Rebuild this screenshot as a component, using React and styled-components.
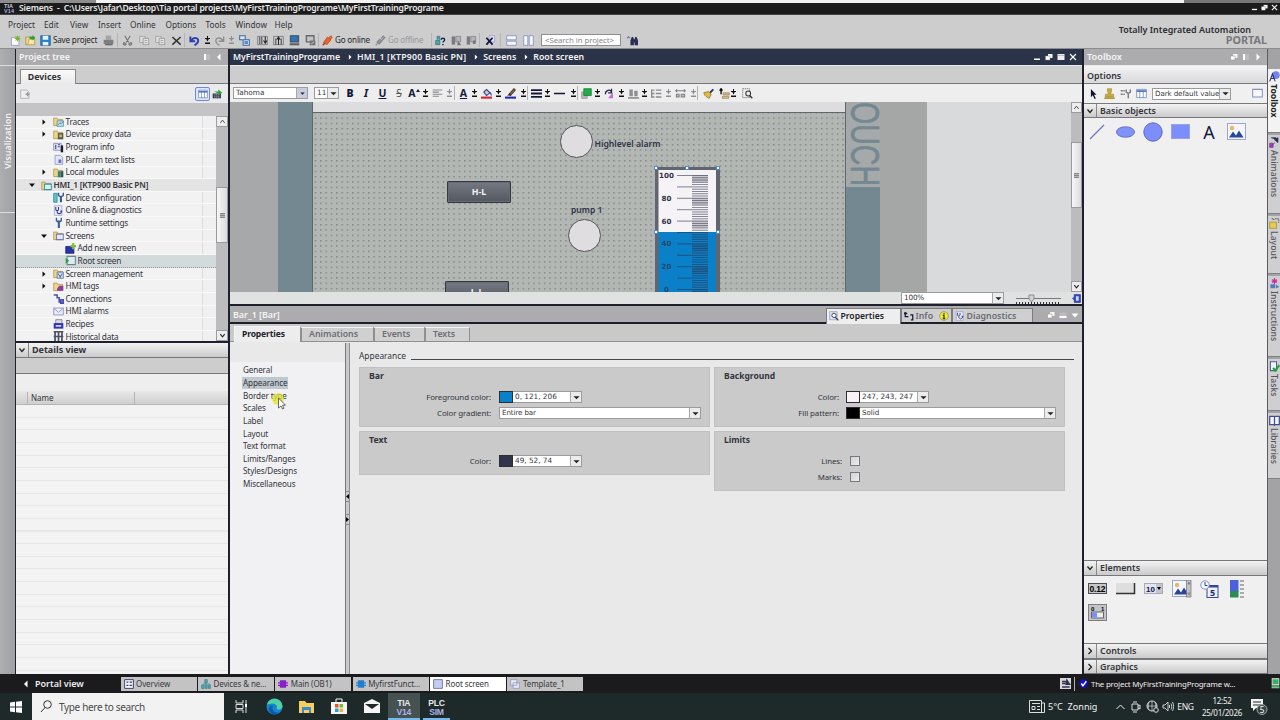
import React from 'react';
import styled, { createGlobalStyle, css, ThemeProvider } from 'styled-components';

const theme = {
  color: {
    text: '#34353b',
    chrome: '#cdcdce',
    panel: '#f0f0f1',
    head: '#acacae',
    navy: '#2b3348',
    edge: '#1e202b',
    line: '#77787c',
    group: '#cacacb',
  },
  font: {
    ui: '"Noto Sans", "Open Sans", sans-serif',
    form: '"DejaVu Sans", sans-serif',
  },
};

const GlobalStyle = createGlobalStyle`
  * { box-sizing: border-box; }
  body {
    margin: 0;
    width: 1280px;
    height: 720px;
    overflow: hidden;
    font-family: ${theme.font.ui};
    font-size: 8.6px;
    line-height: 12px;
    color: ${theme.color.text};
  }
  svg { display: block; flex: none; }
`;

const Label = styled.span`
  white-space: pre;
  font-size: ${props => props.$size || 8.6}px;
  font-weight: ${props => props.$weight || 400};
  letter-spacing: ${props => props.$track || 0}px;
  color: ${props => props.$color || 'inherit'};
  line-height: 12px;
`;

const Window = styled.div`
  width: 1280px;
  height: 720px;
  display: flex;
  flex-direction: column;
  background: ${props => props.theme.color.chrome};
`;

const TopSliver = styled.div`
  height: 3px;
  flex: none;
  background: linear-gradient(90deg, #8d8d8d 96px, #f2f2f2 96px, #f2f2f2 1184px, #777 1184px);
`;

const TitleBar = styled.header`
  height: 12px;
  flex: none;
  display: flex;
  align-items: center;
  padding: 0 1px 2px 4px;
  background: #1b1b1c;
  border-bottom: 1px solid #454546;
  color: #e8e8e8;
`;

const Spacer = styled.div`
  flex: 1;
`;

const TopArea = styled.div`
  height: 34px;
  flex: none;
  display: flex;
  justify-content: space-between;
  border-bottom: 1px solid #8d8d90;
`;

const MenuBar = styled.nav`
  height: 18px;
  display: flex;
  align-items: center;
  padding: 1px 0 0 8px;
`;

const MenuItem = styled.span`
  width: ${props => props.$w}px;
  white-space: pre;
  font-size: 8.3px;
`;

const ToolRow = styled.div`
  display: flex;
  align-items: center;
  height: ${props => props.$h || 14}px;
  padding-left: ${props => props.$pad || 0}px;
`;

const Slot = styled.div`
  width: ${props => props.$w}px;
  height: 14px;
  display: flex;
  align-items: center;
  justify-content: ${props => (props.$start ? 'flex-start' : 'center')};
  flex: none;
  white-space: nowrap;
  ${props => props.$sep && css`border-left: 1px solid #b3b3b5;`}
`;

const SearchBox = styled.div`
  width: 80px;
  height: 12px;
  border: 1px solid #8f8f92;
  background: #fff;
  display: flex;
  align-items: center;
  padding-left: 3px;
  color: #8b8b8e;
`;

const Brand = styled.div`
  display: flex;
  flex-direction: column;
  align-items: flex-end;
  padding: 9px 13px 0 0;
  & > :first-child { margin-right: 16px; line-height: 11px; }
  & > :last-child { line-height: 9px; }
`;

const Work = styled.main`
  height: 625px;
  flex: none;
  display: flex;
`;

const Rail = styled.aside`
  width: 16px;
  background: linear-gradient(90deg, #aeaeb1, #9fa0a3);
  border-right: 1px solid ${props => props.theme.color.edge};
  display: flex;
  flex-direction: column;
`;

const RailTop = styled.div`
  height: 17px;
  border-bottom: 1px solid #ddd;
`;

const RailTab = styled.div`
  height: 147px;
  border-bottom: 1px solid #ddd;
  display: flex;
  align-items: flex-end;
  justify-content: center;
  padding-bottom: 43px;
`;

const RailText = styled.span`
  writing-mode: vertical-rl;
  transform: rotate(180deg);
  color: #f3f3f5;
  font-size: 9px;
  font-weight: 600;
  line-height: 12px;
`;

const Column = styled.section`
  width: ${props => props.$w}px;
  flex: none;
  display: flex;
  flex-direction: column;
  background: ${props => props.theme.color.panel};
  border-right: ${props => props.$edge || 0}px solid ${props => props.theme.color.edge};
`;

const PanelHead = styled.div`
  height: 17px;
  flex: none;
  display: flex;
  align-items: center;
  gap: 4px;
  padding: 0 5px 0 3px;
  color: #f4f4f4;
  background: ${props => (props.$active ? props.theme.color.navy : props.theme.color.head)};
  border-bottom: 1px solid #e9e9ea;
`;

const Band = styled.div`
  height: ${props => props.$h}px;
  flex: none;
  display: flex;
  align-items: ${props => (props.$center ? 'center' : 'flex-end')};
  background: ${props => props.$bg || props.theme.color.chrome};
  border-bottom: ${props => (props.$flat ? 'none' : `1px solid ${props.theme.color.line}`)};
`;

const DevicesTab = styled.div`
  width: 56px;
  height: 15px;
  margin: 0 0 -1px 4px;
  padding-right: 7px;
  display: flex;
  align-items: center;
  justify-content: center;
  background: linear-gradient(#fafafa, #eaeaeb);
  border: 1px solid #8a8a8d;
  border-bottom: none;
`;

const TreeTools = styled.div`
  height: 19px;
  flex: none;
  display: flex;
  align-items: center;
  padding: 0 5px 0 4px;
  gap: 2px;
  background: #eaeaec;
`;

const ToggleBox = styled.div`
  width: 15px;
  height: 14px;
  border: 1px solid #6b8bcf;
  border-radius: 2px;
  background: #dde5f7;
  display: flex;
  align-items: center;
  justify-content: center;
`;

const TreeArea = styled.div`
  height: 227px;
  flex: none;
  display: flex;
  overflow: hidden;
  border-bottom: 2px solid ${props => props.theme.color.edge};
`;

const TreeList = styled.div`
  width: 200px;
  overflow: hidden;
  background: linear-gradient(90deg, #f2f2f3 186px, #dcdcde 186px, #dcdcde 187px, #f0f0f1 187px);
`;

const TreeRow = styled.div`
  height: 12.65px;
  display: flex;
  align-items: center;
  padding-left: ${props => 13 + props.$depth * 12}px;
  border-bottom: 1px solid #f9f9fa;
  ${props => props.$strong && css`background: #e4e4e5;`}
  ${props => props.$selected && css`
    background: #d3dadb;
    border-bottom: 1px dotted #8d9698;
  `}
`;

const TreeIcon = styled.span`
  width: ${props => props.$w}px;
  display: flex;
  flex: none;
`;

const ScrollTrack = styled.div`
  width: ${props => props.$w || 11}px;
  flex: none;
  display: flex;
  flex-direction: column;
  background: #bcbcbf;
`;

const ScrollButton = styled.div`
  height: 11px;
  display: flex;
  align-items: center;
  justify-content: center;
  background: #ededee;
  border: 1px solid #9c9c9f;
`;

const Thumb = styled.div`
  height: ${props => props.$h}px;
  margin-top: ${props => props.$top}px;
  background: linear-gradient(90deg, #f7f7f8, #dcdcde);
  border: 1px solid #9a9a9d;
  display: flex;
  align-items: center;
  justify-content: center;
`;

const Grip = styled.i`
  width: 5px;
  height: 5px;
  background: repeating-linear-gradient(#88888b 0 1px, #b5b5b8 1px 2px);
`;

const SectionHead = styled.div`
  height: ${props => props.$h || 15}px;
  flex: none;
  display: flex;
  align-items: center;
  background: linear-gradient(#f2f2f3, #cbcbcc);
  border-top: ${props => (props.$top ? '1px solid #77787c' : 'none')};
  border-bottom: 1px solid #77787c;
`;

const SectionToggle = styled.div`
  width: 13px;
  align-self: stretch;
  display: flex;
  align-items: center;
  justify-content: center;
  border-right: 1px solid #88888b;
  margin-right: 3px;
`;

const NameHead = styled.div`
  height: 14px;
  flex: none;
  display: grid;
  grid-template-columns: 12px 107px 1fr;
  align-items: center;
  background: linear-gradient(#e8e8e9, #cfcfd0);
  border-bottom: 1px solid #b5b5b7;
  & > span { border-right: 1px solid #b5b5b7; padding-left: 3px; height: 12px; }
`;

const EmptyRows = styled.div`
  flex: 1;
  background: repeating-linear-gradient(#f3f3f4 0 11.6px, #e7e7ea 11.6px 12.65px);
`;

const FormatBar = styled.div`
  height: 18px;
  flex: none;
  display: flex;
  align-items: center;
  padding-left: 3px;
  background: #eeeeef;
`;

const Combo = styled.div`
  width: ${props => props.$w}px;
  height: 12px;
  flex: none;
  display: flex;
  align-items: stretch;
  background: #fff;
  border: 1px solid #9b9b9e;
  color: #36373c;
`;

const ComboText = styled.span`
  flex: 1;
  white-space: nowrap;
  font-family: ${props => props.theme.font.form};
  font-size: ${props => props.$size || 7.3}px;
  letter-spacing: ${props => props.$track || 0}px;
  line-height: 10.5px;
  padding-left: 2px;
`;

const ComboButton = styled.span`
  width: 11px;
  flex: none;
  display: flex;
  align-items: center;
  justify-content: center;
  border-left: 1px solid #a9a9ac;
  background: ${props => props.$bg || '#ececed'};
`;

const Swatch = styled.span`
  width: 14px;
  margin: -1px 0 -1px -1px;
  background: ${props => props.$color};
  border: 1px solid #2e2e33;
`;

const CanvasRow = styled.div`
  height: 190px;
  flex: none;
  display: flex;
  overflow: hidden;
`;

/* The device is a free canvas, its objects keep their own coordinates. */
const Canvas = styled.div`
  position: relative;
  width: 841px;
  height: 190px;
  overflow: hidden;
  display: grid;
  grid-template-columns: 48px 34px 534px 34px 47px 144px;
  background: #d9dadb;
`;

const CasePart = styled.div`
  background: ${props => props.$bg};
`;

const Screen = styled.div`
  border-left: 1px solid #62656c;
  border-right: 1px solid #62656c;
  background:
    radial-gradient(circle at 2.6px 2.6px, #646a69 0.4px, transparent 0.8px) 0 13.6px / 5.34px 5.34px,
    #b3b7b3;
`;

const ScreenBand = styled.div`
  height: 11px;
  background: #dddcdf;
  border-bottom: 1px solid #62656c;
`;

const CanvasItem = styled.div`
  position: absolute;
  left: ${props => props.$x}px;
  top: ${props => props.$y}px;
`;

const Lamp = styled(CanvasItem)`
  width: 33px;
  height: 33px;
  border-radius: 50%;
  background: #dfdde0;
  border: 1px solid #53535b;
`;

const HmiButton = styled(CanvasItem)`
  width: 64px;
  height: 22px;
  border: 1px solid #35383f;
  border-radius: 1px;
  background: linear-gradient(#757982, #53575f);
  box-shadow: inset 0 0 0 1px #666a72;
  color: #f3f3f5;
  display: flex;
  align-items: center;
  justify-content: center;
`;

const ZoomBar = styled.div`
  height: 12px;
  flex: none;
  display: flex;
  align-items: center;
  padding-left: 671px;
  background: #dfe2e0;
`;

const InspectorHead = styled.div`
  height: 20px;
  flex: none;
  display: flex;
  align-items: flex-end;
  padding-left: 3px;
  color: #f4f4f4;
  background: ${props => props.theme.color.head};
  border-top: 2px solid ${props => props.theme.color.edge};
  border-bottom: 2px solid ${props => props.theme.color.edge};
  & > :first-child { margin-bottom: 1px; }
`;

const InspectorTab = styled.div`
  width: ${props => props.$w}px;
  height: ${props => (props.$active ? 16 : 14)}px;
  margin-bottom: ${props => (props.$active ? -2 : 0)}px;
  padding-bottom: ${props => (props.$active ? 1 : 0)}px;
  display: flex;
  align-items: center;
  gap: 1.5px;
  padding-left: 2px;
  color: ${props => (props.$active ? '#222328' : '#6b6c70')};
  background: ${props => (props.$active ? '#eeeeef' : '#cfcfd0')};
  border: 1px solid #7c7c80;
  border-bottom: none;
`;

const HeadIcons = styled.div`
  height: 15px;
  flex: 1;
  display: flex;
  align-items: center;
  justify-content: flex-end;
  gap: 4px;
  padding-right: 3px;
`;

const PropTabs = styled.div`
  height: 18px;
  flex: none;
  display: flex;
  align-items: flex-end;
  padding-left: 4px;
  background: #c9c9ca;
  border-bottom: 1px solid #909093;
`;

const PropTab = styled.div`
  width: ${props => props.$w}px;
  height: ${props => (props.$active ? 16 : 14)}px;
  margin-bottom: ${props => (props.$active ? -1 : 0)}px;
  padding: 0 0 ${props => (props.$active ? 2 : 1)}px 7px;
  display: flex;
  align-items: center;
  color: ${props => (props.$active ? '#222328' : '#6d6e73')};
  background: ${props => (props.$active ? '#ededee' : '#d0d0d1')};
  border-top: 1px solid #f4f4f4;
  border-left: ${props => (props.$active ? '1px solid #f6f6f6' : '2px solid #909094')};
  ${props => props.$last && css`border-right: 1px solid #909094;`}
`;

const PropBody = styled.div`
  flex: 1;
  min-height: 0;
  display: flex;
  background: #e9e9ea;
`;

const PropNav = styled.ul`
  width: 115px;
  margin: 0;
  padding: 22px 0 0 12px;
  list-style: none;
  background: linear-gradient(#e9e9ea 20px, #f1f1f3 20px);
`;

const PropNavItem = styled.li`
  height: 12.65px;
  display: flex;
  align-items: center;
  & > span {
    padding: 0 1px;
    background: ${props => (props.$selected ? '#c0c8cf' : 'transparent')};
  }
`;

const Splitter = styled.div`
  width: 5px;
  margin-top: 1px;
  background: #c9c9cb;
  border-left: 1px solid #77787c;
  border-right: 1px solid #8d8d90;
  display: flex;
  flex-direction: column;
  gap: 12px;
  padding-top: 148px;
`;

const SplitHandle = styled.div`
  height: 11px;
  display: flex;
  align-items: center;
  border-top: 1px solid #8b8b8e;
  border-bottom: 1px solid #8b8b8e;
`;

const PropPage = styled.div`
  flex: 1;
  padding: 8px 8px 0 9px;
`;

const PageTitle = styled.div`
  height: 12px;
  display: flex;
  align-items: center;
  gap: 5px;
  &::after {
    content: '';
    flex: 1;
    height: 1px;
    margin-top: 6px;
    background: #46474c;
  }
`;

const Groups = styled.div`
  display: grid;
  grid-template-columns: 351px 351px;
  column-gap: 4px;
  padding-top: 5px;
`;

const GroupStack = styled.div`
  display: flex;
  flex-direction: column;
  gap: 4px;
`;

const Group = styled.div`
  height: ${props => props.$h}px;
  padding: 2px 0 0 9px;
  background: ${props => props.theme.color.group};
  border: 1px solid #c0c0c2;
`;

const GroupRows = styled.div`
  padding-top: 7px;
`;

const Field = styled.div`
  height: 16px;
  display: flex;
  align-items: center;
  & > :first-child {
    width: ${props => props.$lw}px;
    text-align: right;
    margin-right: ${props => props.$gap || 7}px;
  }
`;

const Checkbox = styled.span`
  width: 10px;
  height: 10px;
  border: 1px solid #77787c;
  background: linear-gradient(135deg, #d3d3d5, #ededee);
`;

const ToolboxBody = styled.div`
  height: ${props => props.$h}px;
  flex: none;
  display: grid;
  grid-template-columns: repeat(6, 28px);
  grid-auto-rows: 24px;
  justify-items: center;
  align-items: center;
  align-content: start;
  padding-top: ${props => props.$top}px;
  margin-left: ${props => props.$left || 0}px;
`;

const SideTabs = styled.aside`
  width: 13px;
  flex: none;
  display: flex;
  flex-direction: column;
  gap: 2px;
  padding-top: 20px;
  background: #a3a3a6;
  border-left: 1px solid #5b5b60;
`;

const SideTab = styled.div`
  height: ${props => props.$h}px;
  display: flex;
  flex-direction: column;
  align-items: center;
  gap: 2px;
  padding-top: 2px;
  background: ${props => (props.$active ? '#f3f3f4' : '#cfcfd1')};
  border-bottom: 1px solid #818185;
  & > span {
    writing-mode: vertical-rl;
    font-weight: ${props => (props.$active ? 700 : 500)};
    font-size: 8.7px;
    line-height: 12px;
    color: ${props => (props.$active ? '#222' : '#55565c')};
  }
`;

const StatusBar = styled.footer`
  height: 19px;
  flex: none;
  display: flex;
  align-items: center;
  background: #1b1b1d;
  color: #ededee;
`;

const EditorTab = styled.div`
  width: 76px;
  height: 14px;
  margin-right: 1.4px;
  padding-left: 3px;
  display: flex;
  align-items: center;
  gap: 2.5px;
  color: #38393d;
  background: ${props => (props.$active ? '#fff' : '#c3c3c4')};
`;

const Taskbar = styled.div`
  height: 27px;
  flex: none;
  display: flex;
  align-items: center;
  background: #1e2a2a;
  color: #f1f1f1;
`;

const TaskSearch = styled.div`
  width: 192px;
  height: 27px;
  display: flex;
  align-items: center;
  gap: 7px;
  padding-left: 8px;
  margin-right: 1px;
  background: #f2f2f2;
  color: #4b4b4d;
`;

const TaskApp = styled.div`
  width: ${props => props.$w}px;
  height: 27px;
  display: flex;
  flex-direction: column;
  align-items: center;
  justify-content: center;
  background: ${props => (props.$active ? '#465152' : 'transparent')};
  ${props => props.$open && css`box-shadow: inset 0 -2px #76b9ed;`}
`;

const AppWord = styled.span`
  font-family: "Liberation Sans", sans-serif;
  font-size: 8.6px;
  font-weight: 700;
  line-height: 10px;
  height: 8.5px;
  letter-spacing: -0.3px;
  color: ${props => props.$color || '#e6e8ee'};
`;

const Clock = styled.div`
  width: 54px;
  display: flex;
  flex-direction: column;
  align-items: center;
`;

const Crumb = styled.span`
  margin-right: 3px;
  font-size: 8.75px;
  font-weight: 600;
  white-space: pre;
  letter-spacing: ${props => props.$track || 0}px;
`;

const Pointer = styled.div`
  position: absolute;
  left: 271px;
  top: 390px;
`;

const Folder = ({ children }) => (
  <>
    <path d="M1 3h5l1 2h7v9H1z" fill="#f0d489" stroke="#a58a45" />
    {children}
  </>
);

const glyphs = {
  newProject: <><path d="M2 4h9l2 2v9H2z" fill="#fff" stroke="#8088b0" /><path d="M11 1v8M7 5h8M8 2l6 6M14 2L8 8" stroke="#77b82a" strokeWidth="1.5" /></>,
  openProject: <Folder><path d="M6 6h8v8H4z" fill="#f8e9a2" stroke="#b49a4c" /><path d="M6 2h5v-2l4 4-4 4V6H8z" fill="#2d9d3a" /></Folder>,
  save: <><path d="M1 1h14v14H1z" fill="#2686c8" stroke="#155b91" /><path d="M4 1h8v6H4zM4 10h8v5H4z" fill="#e8f2fa" /></>,
  printer: <><path d="M4 1h8v6H4z" fill="#a5a5a5" /><path d="M1 7h14v6H1z" fill="#7e7e80" /><path d="M3 14h11" stroke="#69696b" strokeWidth="2" /></>,
  cut: <path d="M4 1l6 10M12 1L6 11M3 11a2 2 0 1 0 3 2zM13 11a2 2 0 1 1-3 2z" fill="none" stroke="#717175" strokeWidth="1.6" />,
  copy: <><path d="M1 2h8v9H1z" fill="#ddd" stroke="#949499" /><path d="M6 5h8v9H6z" fill="#e4e4e5" stroke="#8a8a8e" /><path d="M8 8h4M8 11h4" stroke="#8a8a8e" /></>,
  cross: <path d="M2 3l12 11M14 3L2 14" stroke="#333" strokeWidth="2.2" />,
  undo: <path d="M2 2v7h7M3 8c4-6 12-4 10 2-1 3-3 4-5 5" fill="none" stroke="#2d3fb0" strokeWidth="2.8" />,
  redo: <path d="M14 2v7H7M13 8C9 2 1 4 3 10c1 3 3 4 5 5" fill="none" stroke="#8d8d91" strokeWidth="2" />,
  compile: <><path d="M1 1h8v6H1zM6 7h9v8H6z" fill="#dbe9f7" stroke="#3a67a3" strokeWidth="1.5" /><path d="M8 10h5M8 12h5" stroke="#3a67a3" strokeWidth="1.5" /></>,
  download: <><path d="M1 2h14v12H1z" fill="#cfcfd1" stroke="#5f5f64" /><path d="M4 3v10M7 3v10" stroke="#66666b" strokeWidth="2" /><path d="M12 2v9M9.5 8l2.5 4 2.5-4" stroke="#222" fill="none" strokeWidth="1.5" /></>,
  upload: <><path d="M1 2h14v12H1z" fill="#cfcfd1" stroke="#5f5f64" /><path d="M4 5v9M12 5v9" stroke="#66666b" strokeWidth="2" /><path d="M8 14V4M5.5 7L8 3l2.5 4" stroke="#222" fill="none" strokeWidth="1.5" /></>,
  monitor: <><path d="M2 1h12v9H2z" fill="#2e76b5" stroke="#474b59" strokeWidth="1.5" /><path d="M1 12h14v3H1z" fill="#57606d" /></>,
  runtime: <><path d="M2 1h11v9H2z" fill="#c4c4c6" stroke="#68686c" strokeWidth="2" /><path d="M7 8h8v7H7z" fill="#717175" /><path d="M9 13l4-3" stroke="#eee" /></>,
  plug: <><path d="M1 15l4-4" stroke="#b53a14" strokeWidth="2" /><path d="M2 11L8 3l5 4-6 7z" fill="#e8662c" stroke="#b53a14" /><path d="M10 4l4-3M12 6l3-3" stroke="#d35322" strokeWidth="2" /></>,
  unplug: <><path d="M1 15l3-3M3 10l4-4 3 3-4 4z" fill="#999" stroke="#858589" strokeWidth="1.5" /><path d="M9 5l4-4M10 8l5-5" stroke="#858589" strokeWidth="2" /></>,
  nodeHelp: <><path d="M1 14V8h6v6zM3 7V2h4v5" fill="#4fa4ae" stroke="#2b6d77" /><path d="M9 7c0-3 5-3 5 0 0 2-2.500 2-2.500 4M11.500 13v2" fill="none" stroke="#20224b" strokeWidth="2" /></>,
  station: <><path d="M1 2h5v12H1z" fill="#7c7c80" /><path d="M7 2h7v8H7z" fill="#b5b5b8" stroke="#7c7c80" /><path d="M10 8l5 7H9z" fill="#76767a" /></>,
  stationStop: <><path d="M1 2h5v12H1z" fill="#7c7c80" /><path d="M7 2h7v8H7z" fill="#b5b5b8" stroke="#7c7c80" /><path d="M10 8h4v5h-4z" fill="#76767a" /></>,
  closeX: <><path d="M6 1h8v9H6z" fill="#dfe4f6" stroke="#9097bd" /><path d="M2 4l9 10M11 4L2 14" stroke="#141640" strokeWidth="2.6" /></>,
  splitH: <path d="M1 1h14v6H1zM1 9h14v6H1z" fill="#f7f8fd" stroke="#8792c4" strokeWidth="1.3" />,
  splitV: <path d="M1 1h6v14H1zM9 1h6v14H9z" fill="#f7f8fd" stroke="#8792c4" strokeWidth="1.3" />,
  find: <><path d="M0 4h5M0 4l3-2" stroke="#77a" strokeWidth="1.5" /><path d="M5 8l2-5h2l1 3h1l1-3h2l2 5v7h-5v-4h-1v4H5z" fill="#292d58" /></>,
  restore: <><path d="M6 2h9v8H6z" fill="#f5f5f5" /><path d="M1 6h9v8H1z" fill="#fff" stroke="#888" /></>,
  minimize: <path d="M2 11h12v3H2z" fill="#fff" />,
  maximize: <><path d="M1 2h14v12H1z" fill="#eee" /><path d="M1 5h14" stroke="#8c8f9b" /></>,
  close: <path d="M2 2l12 12M14 2L2 14" stroke="#fff" strokeWidth="2.4" />,
  pane: <><path d="M2 2h12v12H2z" fill="#bbb" /><path d="M2 2h4v12H2z" fill="#fff" /></>,
  strip: <><path d="M1 3h14v11H1z" fill="#bdbdc0" /><path d="M1 10h14v4H1z" fill="#fff" /></>,
  left: <path d="M11 1v14L4 8z" fill="#fff" />,
  right: <path d="M5 1v14l7-7z" fill="#fff" />,
  downTri: <path d="M1 5h14l-7 8z" fill="#fff" />,
  chevronDown: <path d="M3 5l5 6 5-6" fill="none" stroke="#222" strokeWidth="2.5" />,
  chevronRight: <path d="M5 2l6 6-6 6" fill="none" stroke="#222" strokeWidth="2.5" />,
  chevronUp: <path d="M3 11l5-6 5 6" fill="none" stroke="#333" strokeWidth="2" />,
  solidDown: <path d="M1 5h14l-7 7z" fill="#222" />,
  solidRight: <path d="M4 1v14l8-7z" fill="#111" />,
  openNode: <path d="M0 4h16l-8 9z" fill="#111" />,
  page: <><path d="M1 3h9l3 3v9H1z" fill="#eee" stroke="#9d9da1" /><path d="M8 9h6M11 6v6" stroke="#999" strokeWidth="2" /></>,
  grid: <><path d="M1 2h14v12H1z" fill="#fff" stroke="#5673b8" /><path d="M1 4.500h14" stroke="#5673b8" strokeWidth="2.5" /><path d="M5.500 4v10M10.500 4v10" stroke="#5673b8" /></>,
  treeLink: <><path d="M1 8h12v7H1z" fill="#2d3448" /><path d="M3 10h8M3 13h8" stroke="#fff" strokeDasharray="2 1" /><path d="M3 5h6V2l6 5-6 4V8" fill="#2fa03e" /></>,
  traces: <Folder><path d="M6 7h9v8H6z" fill="#bfe1f3" stroke="#377ea5" /><path d="M7 13l3-3 2 1 3-3" fill="none" stroke="#266" /></Folder>,
  proxy: <Folder><path d="M7 6h8v9H7z" fill="#555b58" /><path d="M9 8h4v4H9z" fill="#c9b75f" /></Folder>,
  program: <><path d="M1 2h11v10H1z" fill="#e6e9f6" stroke="#6a72a8" /><path d="M4 4v6M7 4h3M7 7h3" stroke="#373e82" strokeWidth="1.6" /><path d="M13 5v10" stroke="#1a1a2c" strokeWidth="3.5" /></>,
  list: <><path d="M3 2h8l3 3v10H3z" fill="#e2e5f8" stroke="#7c84bd" /><path d="M5 5v8h3V8h4v5H5" fill="#6870b9" /></>,
  modules: <Folder><path d="M7 6h4v9H7z" fill="#338a70" /><path d="M11 6h4v9h-4z" fill="#3b5667" /></Folder>,
  hmi: <Folder><path d="M5 6h10v8H5z" fill="#d9f3f5" stroke="#3998a1" strokeWidth="1.5" /></Folder>,
  config: <><path d="M1 2h5v13H1z" fill="#59c6c9" stroke="#237c83" /><path d="M8 1v4l3 2v8M15 1v4l-3 2v8" stroke="#34569b" fill="none" strokeWidth="2" /></>,
  diag: <><path d="M2 1h11v14H2z" fill="#e9ecfa" stroke="#9099c6" /><path d="M4 3v3c0 3 4 3 4 0V3M6 9c0 5 6 4 6 1" fill="none" stroke="#39438d" strokeWidth="1.6" /><circle cx="12" cy="9" r="1.500" fill="#39438d" /></>,
  wrench: <path d="M4 1v5l3 2v8h3V8l3-2V1h-2v4H6V1z" fill="#385b98" />,
  screens: <Folder><path d="M5 6h10v8H5z" fill="#e7eaff" stroke="#777eaf" strokeWidth="1.5" /></Folder>,
  addScreen: <><path d="M1 5h12v10H1z" fill="#2933b0" stroke="#14196a" /><path d="M12 0v9M8 4.500h8" stroke="#7fc13a" strokeWidth="3" /></>,
  rootScreen: <><path d="M3 2h12v12H3z" fill="#dcebf1" stroke="#70818f" strokeWidth="1.5" /><path d="M1 4v9l5-4.500z" fill="#299d43" /></>,
  management: <Folder><path d="M6 6h9v9H6z" fill="#d3e1f2" stroke="#45618d" /><path d="M8 8v2l2 1v3M13 8v2l-2 1v3" stroke="#29467e" fill="none" /></Folder>,
  tags: <Folder><path d="M6 11l3-4h6v7H6z" fill="#8b3ca1" /></Folder>,
  connections: <path d="M1 3h5v4h3v6h5M11 10h4v5h-4z" fill="none" stroke="#4850b0" strokeWidth="2.2" />,
  mail: <path d="M1 3h14v10H1zM1 3l7 6 7-6" fill="#e9eafb" stroke="#8c92ca" strokeWidth="1.3" />,
  recipes: <><path d="M4 1h9v6H4z" fill="#dde" stroke="#667" /><path d="M1 6h14v8H1z" fill="#2b36b8" /><path d="M4 10h8" stroke="#fff" strokeWidth="2" /></>,
  history: <path d="M1 1h14M3 1v14M8 1v14M13 1v14M1 8h14" stroke="#4c5064" strokeWidth="2.5" />,
  align: <path d="M1 3h14M1 6h9M1 9h14M1 12h9" stroke="#8b8b8f" strokeWidth="1.6" />,
  fill: <><path d="M4 6l4-4 5 5-5 4z" fill="#c5cbe8" stroke="#30356e" strokeWidth="1.5" /><path d="M12 6c3 1 3 3 3 5" stroke="#3d48b5" strokeWidth="1.8" /><path d="M0 14h16" stroke="#d02031" strokeWidth="3" /></>,
  pen: <><path d="M6 9L13 1l2 2-7 8z" fill="#9b6d35" stroke="#4c3b2e" strokeWidth="1.5" /><path d="M3 11l4-3 1 3z" fill="#222" /><path d="M0 14h16" stroke="#2029b5" strokeWidth="3" /></>,
  lines: <path d="M0 3h16M0 8h16M0 13h16" stroke="#15183c" strokeWidth="2.7" />,
  line: <path d="M0 8h16" stroke="#15183c" strokeWidth="2.2" />,
  order: <><path d="M1 6h8v9H1z" fill="#bbb" stroke="#888" /><path d="M4 1h11v10H4z" fill="#23ae45" stroke="#11752d" /></>,
  rotate: <><path d="M2 9c0-6 7-8 9-3M11 1v6H6" fill="none" stroke="#23284f" strokeWidth="1.8" /><path d="M13 6v9H6z" fill="#c16be0" /></>,
  bottom: <><path d="M2 2h5v10H2zM9 4h5v8H9z" fill="#8f8f93" /><path d="M0 14.500h16" stroke="#555" strokeWidth="1.5" /></>,
  spread: <path d="M1 2v12M1 3h4M1 8h4M1 13h4M7 3h8M7 8h8M7 13h8" stroke="#8b8b8f" strokeWidth="2" />,
  size: <path d="M1 4h14M3 2L1 4l2 2M13 2l2 2-2 2M2 9h4v4H2zM9 9h5v4H9z" stroke="#808084" fill="#bbb" strokeWidth="1.5" />,
  brush: <><path d="M9 6l5-5 2 2-5 5z" fill="#27336d" /><path d="M1 7l7-2 4 4-3 6c-3-1-6-3-8-8z" fill="#e8ba3f" stroke="#816318" /></>,
  layer: <><path d="M3 1v8M1 4l2-3 2 3" stroke="#111" fill="none" strokeWidth="2" /><path d="M6 7h9v3H6zM5 12h9v3H5z" fill="#e3c18c" stroke="#8e7650" /></>,
  zoomArea: <><path d="M1 1h10v13H1z" fill="none" stroke="#555" strokeDasharray="2 1" /><circle cx="9" cy="8" r="3.500" fill="#eee" stroke="#333" strokeWidth="1.5" /><path d="M11 11l4 4" stroke="#333" strokeWidth="2" /></>,
  arrow: <path d="M3 0v13l3-3 3 6 2-1-3-6h4z" fill="#111238" />,
  stamp: <path d="M5 1h6v4l-2 4h5v4H2V9h5L5 5zM1 14h14v2H1z" fill="#c9ad37" stroke="#8c7623" strokeWidth=".7" />,
  tool: <path d="M1 4h3M1 9h3M5 4h2M5 9h2M9 2v4l3 2v7M15 2v4l-3 2" stroke="#77777c" fill="none" strokeWidth="2" />,
  rect: <path d="M1 2h14v11H1z" fill="#f7f8ff" stroke="#8391bd" strokeWidth="1.5" />,
  screenTab: <path d="M1 1h14v14H1z" fill="#c6cdf0" stroke="#6c76ac" strokeWidth="1.5" />,
  infoLink: <><path d="M2 2v7h5M2 2L0 5M2 2l3 3M10 6h4v8h-3" stroke="#16183a" fill="none" strokeWidth="2" /></>,
  magnify: <><path d="M1 1h12v13H1z" fill="#dfe4f7" stroke="#838cb5" /><circle cx="8" cy="7" r="3.500" fill="#fff" stroke="#39405c" strokeWidth="1.5" /><path d="M10 10l5 5" stroke="#39405c" strokeWidth="2" /></>,
  info: <><circle cx="8" cy="8" r="7" fill="#f0e83c" stroke="#8c8624" /><path d="M8 3v2M6 7h2v5M6 12h4" stroke="#333" fill="none" strokeWidth="2" /></>,
  block: <><path d="M3 2h10v12H3z" fill="currentColor" /><path d="M0 6h16M0 10h16" stroke="currentColor" strokeWidth="2" /></>,
  network: <><path d="M6 1h4v5H6zM1 10h4v5H1zM7 10h3v5H7zM12 10h3v5h-3z" fill="#4cb3bd" stroke="#27747e" /><path d="M8 6v4M3 10V8h11v2" stroke="#27747e" fill="none" /></>,
  overview: <><path d="M1 1h14v14H1z" fill="#f4f5fd" stroke="#383e66" strokeWidth="1.5" /><path d="M4 5h3M9 5h4M4 10h3M9 10h4" stroke="#383e66" strokeWidth="2" /></>,
  template: <path d="M1 1h10v9H1zM5 6h10v9H5z" fill="#e5e8fb" stroke="#8289b8" />,
  check: <><circle cx="8" cy="8" r="7.500" fill="#1010d0" /><path d="M4 8l3 4 6-8" fill="none" stroke="#fff" strokeWidth="2.4" /></>,
  portalPage: <><path d="M0 0h16v16H0z" fill="#d7d7dc" /><path d="M3 5h7M3 8h5M10 3l4 6h-5zM3 13h11" stroke="#30334d" strokeWidth="2" fill="#30334d" /></>,
  pc: <><path d="M2 1h12v9H2z" fill="#3aae62" stroke="#d9efdf" strokeWidth="1.5" /><path d="M1 12h14v3H1z" fill="#6ac98a" /></>,
  shapes: <><circle cx="10" cy="6" r="5.500" fill="#7385ef" /><path d="M1 15L5 4l4 11M2.500 11h5" stroke="#28306e" fill="none" strokeWidth="1.5" /></>,
  motion: <><path d="M3 1h7v3M8 4l5 4V1z" fill="#222b4f" stroke="#222b4f" /><path d="M9 8L4 12M1 9h5v6H1z" fill="#a93bc3" stroke="#733286" /></>,
  layout: <><path d="M1 6h10v9H1z" fill="#e9ca52" stroke="#9c8427" /><path d="M4 1h3v3M9 1h5v6" fill="none" stroke="#77777b" strokeWidth="2" strokeDasharray="2 1" /></>,
  instr: <><path d="M8 0v9M4 4.500h8M5 2l6 5M11 2L5 7" stroke="#cf2ba0" strokeWidth="1.6" /><path d="M2 9h7v6H2zM10 9l5 4-5 2z" fill="#5b78b9" /></>,
  tasks: <><path d="M2 1h9v13H2z" fill="#f2f4ff" stroke="#4a5b94" strokeWidth="1.5" /><path d="M6 10l3 4 6-8" stroke="#24a238" strokeWidth="3" fill="none" /></>,
  book: <path d="M1 2h6l1 1 1-1h6v12H9l-1 1-1-1H1zM8 3v11" fill="#f4f5ff" stroke="#444e88" strokeWidth="1.8" />,
  fit: <><path d="M4 1h11v14H4z" fill="#3449be" stroke="#192872" /><path d="M7 4h5v8H7z" fill="#cad4fa" /><path d="M0 8l5-4v8z" fill="#3449be" /></>,
};

const Icon = ({ name, size = 10, w, color }) => (
  <svg width={w || size} height={size} viewBox="0 0 16 16" fill="none" color={color} preserveAspectRatio="none">
    {glyphs[name]}
  </svg>
);

const Drop = ({ faded }) => (
  <svg width="5" height="9" viewBox="0 0 5 9">
    <path d="M2 0h1v2h2v1H3.800L2.500 5.500 1.200 3H0V2h2zM0 6.500h5V8H0z" fill={faded ? '#8e8e92' : '#111'} />
  </svg>
);

const menu = [['Project', 36], ['Edit', 26], ['View', 28], ['Insert', 32], ['Online', 35.5], ['Options', 40], ['Tools', 30], ['Window', 39], ['Help', 20]];

// [icon or text, slot width, separator, kind]
const mainTools = [
  ['newProject', 16], ['openProject', 15], ['save', 15], ['Save project', 46, 0, 'text'], ['printer', 18],
  ['cut', 19, 1], ['copy', 16], ['copy', 16], ['cross', 16], ['undo', 20, 1], ['', 6, 0, 'drop'], ['redo', 18],
  ['', 6, 0, 'fade'], ['compile', 21, 0], ['download', 15], ['upload', 16], ['monitor', 16], ['runtime', 16],
  ['plug', 17, 1], ['Go online', 38, 0, 'text'], ['unplug', 15], ['Go offline', 43, 0, 'off'], ['nodeHelp', 17, 1],
  ['station', 16], ['stationStop', 15], ['closeX', 21, 1], ['splitH', 21, 1], ['splitV', 14],
];

const formatTools = [
  ['align', 16], ['fade', 9], ['A', 18, 1], ['drop', 5], ['fill', 19], ['drop', 5], ['pen', 19], ['drop', 7],
  ['lines', 18, 1], ['drop', 5], ['line', 19], ['drop', 8], ['order', 18, 1], ['drop', 5],
  ['rotate', 19], ['drop', 5], ['bottom', 18], ['drop', 5], ['spread', 19], ['fade', 5], ['size', 18], ['fade', 8],
  ['brush', 21, 1], ['layer', 13], ['drop', 5], ['zoomArea', 22],
];

const tree = [
  ['Traces', 1, 'traces', 'closed'],
  ['Device proxy data', 1, 'proxy', 'closed'],
  ['Program info', 1, 'program'],
  ['PLC alarm text lists', 1, 'list'],
  ['Local modules', 1, 'modules', 'closed'],
  ['HMI_1 [KTP900 Basic PN]', 0, 'hmi', 'open'],
  ['Device configuration', 1, 'config'],
  ['Online & diagnostics', 1, 'diag'],
  ['Runtime settings', 1, 'wrench'],
  ['Screens', 1, 'screens', 'open'],
  ['Add new screen', 2, 'addScreen'],
  ['Root screen', 2, 'rootScreen'],
  ['Screen management', 1, 'management', 'closed'],
  ['HMI tags', 1, 'tags', 'closed'],
  ['Connections', 1, 'connections'],
  ['HMI alarms', 1, 'mail'],
  ['Recipes', 1, 'recipes'],
  ['Historical data', 1, 'history'],
];

const navItems = ['General', 'Appearance', 'Border type', 'Scales', 'Label', 'Layout', 'Text format', 'Limits/Ranges', 'Styles/Designs', 'Miscellaneous'];

const sideTabs = [
  ['Toolbox', 'shapes', 64], ['Animations', 'motion', 79], ['Layout', 'layout', 58],
  ['Instructions', 'instr', 81], ['Tasks', 'tasks', 52], ['Libraries', 'book', 66],
];

const editorTabs = [
  ['Overview', 'overview'], ['Devices & ne...', 'network'], ['Main (OB1)', 'block', '#8a20c8'],
  ['MyfirstFunct...', 'block', '#207fd0'], ['Root screen', 'screenTab'], ['Template_1', 'template'],
];

const MainToolbar = () => (
  <ToolRow $pad={7}>
    {mainTools.map(([name, w, sep, kind], i) => (
      <Slot key={i} $w={w} $sep={sep} $start={kind === 'text' || kind === 'off'}>
        {(kind === 'text' || kind === 'off') && <Label $size={8.1} $track={-0.18} $color={kind === 'off' ? '#98989b' : '#26262a'}>{name}</Label>}
        {(kind === 'drop' || kind === 'fade') && <Drop faded={kind === 'fade'} />}
        {!kind && <Icon name={name} size={11} />}
      </Slot>
    ))}
    <Slot $w={6} />
    <SearchBox><Label $size={7.9} $track={-0.1}>{'<Search in project>'}</Label></SearchBox>
    <Slot $w={22}><Icon name="find" size={11} /></Slot>
  </ToolRow>
);

const Select = ({ w, text, swatch, size, track }) => (
  <Combo $w={w}>
    {swatch && <Swatch $color={swatch} />}
    <ComboText $size={size} $track={track}>{text}</ComboText>
    <ComboButton><Icon name="solidDown" size={7} /></ComboButton>
  </Combo>
);

const Scroll = ({ top, h, w }) => (
  <ScrollTrack $w={w}>
    <ScrollButton><Icon name="chevronUp" size={7} /></ScrollButton>
    <Thumb $top={top} $h={h}><Grip /></Thumb>
    <Spacer />
    <ScrollButton><Icon name="chevronDown" size={7} /></ScrollButton>
  </ScrollTrack>
);

const ProjectTree = () => (
  <Column $w={214} $edge={2}>
    <PanelHead>
      <Label $size={9} $weight={600}>Project tree</Label>
      <Spacer />
      <Icon name="pane" size={8} />
      <Icon name="left" size={8} />
    </PanelHead>
    <Band $h={18}><DevicesTab><Label $size={8.8} $weight={700}>Devices</Label></DevicesTab></Band>
    <TreeTools>
      <Icon name="page" size={11} />
      <Spacer />
      <ToggleBox><Icon name="grid" size={10} /></ToggleBox>
      <Icon name="treeLink" size={11} />
    </TreeTools>
    <Band $h={13} $flat $bg="#c4c4c6" />
    <TreeArea>
      <TreeList>
        {tree.map(([text, depth, icon, state]) => (
          <TreeRow key={text} $depth={depth} $strong={depth === 0} $selected={text === 'Root screen'}>
            <TreeIcon $w={11.5}>
              {state && <Icon name={state === 'open' ? 'openNode' : 'solidRight'} size={6} />}
            </TreeIcon>
            <TreeIcon $w={13}><Icon name={icon} size={11} /></TreeIcon>
            <Label $size={8.3} $track={depth === 0 ? -0.2 : -0.22} $weight={depth === 0 ? 600 : 400}>{text}</Label>
          </TreeRow>
        ))}
      </TreeList>
      <Scroll top={60} h={56} w={12} />
    </TreeArea>
    <SectionHead>
      <SectionToggle><Icon name="chevronDown" size={8} /></SectionToggle>
      <Label $size={9} $weight={700}>Details view</Label>
    </SectionHead>
    <Band $h={16} />
    <Band $h={17} $flat $bg="#eeeeef" />
    <NameHead><span /><span><Label $size={8}>Name</Label></span><b /></NameHead>
    <EmptyRows />
  </Column>
);

const Gauge = () => (
  <svg width="68" height="130" viewBox="0 0 68 130">
    <rect x="1" y="2" width="65" height="130" fill="#60656f" />
    <rect x="4.500" y="5" width="57.500" height="62" fill="#f6f3f7" />
    <rect x="4.500" y="67" width="57.500" height="65" fill="#0a80c9" />
    {[0, 1, 2, 3, 4, 5].map(i => (
      <rect key={i} x="38" y={10 + i * 22.8} width="16" height="7" fill="#31344a" opacity=".22" />
    ))}
    {Array.from({ length: 53 }, (_, i) => {
      const y = 10.5 + i * 2.28;
      return <path key={i} d={`M${i % 5 === 0 ? 23 : 38} ${y}H54`} stroke="#31344a" strokeWidth=".7" opacity=".85" />;
    })}
    {[100, 80, 60, 40, 20, 0].map((n, i) => (
      <text key={n} x="12.500" y={13 + i * 22.8} textAnchor="middle" fontFamily="DejaVu Sans" fontWeight="700" fontSize="7.100" fill="#31344a" opacity={i > 2 ? 0.75 : 1}>{n}</text>
    ))}
    {[[2, 3], [33, 3], [64, 3], [2, 67], [64, 67]].map(([x, y]) => (
      <rect key={`${x}-${y}`} x={x - 1.5} y={y - 1.5} width="3" height="3" fill="#fff" stroke="#3d86cc" strokeWidth=".8" />
    ))}
  </svg>
);

const ScreenCanvas = () => (
  <CanvasRow>
    <Canvas>
      <CasePart $bg="#a7a8a9" />
      <CasePart $bg="#748891" />
      <Screen><ScreenBand /></Screen>
      <CasePart $bg="linear-gradient(#a6a9a9 85px, #748891 85px)" />
      <CasePart $bg="#a5a7a7" />
      <CasePart $bg="#d9dadb" />
      <CanvasItem $x={616} $y={0}>
        <svg width="34" height="86">
          <text transform="translate(4.500 0) rotate(90)" textLength="84" lengthAdjust="spacingAndGlyphs" fontFamily="Liberation Sans" fontSize="41" fill="#748891" stroke="#748891" strokeWidth=".6">OUCH</text>
        </svg>
      </CanvasItem>
      <Lamp $x={330} $y={23} />
      <CanvasItem $x={364.5} $y={36}><Label $size={8.6} $weight={600} $color="#31344a">Highlevel alarm</Label></CanvasItem>
      <CanvasItem $x={341} $y={102}><Label $size={8.5} $weight={600} $color="#31344a">pump 1</Label></CanvasItem>
      <Lamp $x={338} $y={117} />
      <HmiButton $x={217} $y={79}><Label $size={8.8} $weight={700}>H-L</Label></HmiButton>
      <HmiButton $x={215} $y={179}><Label $size={8.8} $weight={700}>L-L</Label></HmiButton>
      <CanvasItem $x={424} $y={63}><Gauge /></CanvasItem>
    </Canvas>
    <Scroll top={29} h={66} w={11} />
  </CanvasRow>
);

const FormatToolbar = () => (
  <FormatBar>
    <Combo $w={75}>
      <ComboText>Tahoma</ComboText>
      <ComboButton $bg="#c9cde0"><Icon name="solidDown" size={5} /></ComboButton>
    </Combo>
    <Slot $w={6} />
    <Select w={25} text="11" />
    <Slot $w={3} />
    <Slot $w={16}><Label $size={10.5} $weight={900} $color="#15183c">B</Label></Slot>
    <Slot $w={16}><Label $size={10.5} $weight={700} $color="#15183c"><i>I</i></Label></Slot>
    <Slot $w={17}><Label $size={10.5} $weight={700} $color="#15183c"><u>U</u></Label></Slot>
    <Slot $w={16}><Label $size={10} $color="#555"><s>S</s></Label></Slot>
    <Slot $w={14}>
      <Label $size={10.5} $weight={700} $color="#15183c">A</Label>
      <svg width="4" height="8"><path d="M0 3l2-3 2 3z" fill="#15183c" /></svg>
    </Slot>
    <Slot $w={8}><Drop /></Slot>
    {formatTools.map(([name, w, sep], i) => (
      <Slot key={i} $w={w} $sep={sep}>
        {name === 'drop' || name === 'fade' ? <Drop faded={name === 'fade'} /> : name === 'A' ? (
          <Label $size={10.5} $weight={700} $color="#15183c"><u>A</u></Label>
        ) : <Icon name={name} size={11} />}
      </Slot>
    ))}
  </FormatBar>
);

const FieldLabel = ({ children }) => <Label $size={7.9} $track={-0.1}>{children}</Label>;

const Properties = () => (
  <PropBody>
    <PropNav>
      {navItems.map(item => (
        <PropNavItem key={item} $selected={item === 'Appearance'}>
          <Label $size={8.1} $track={-0.1}>{item}</Label>
        </PropNavItem>
      ))}
    </PropNav>
    <Splitter>
      <SplitHandle><svg width="3" height="5"><path d="M3 0v5L0 2.500z" /></svg></SplitHandle>
      <SplitHandle><svg width="3" height="5"><path d="M0 0v5l3-2.500z" /></svg></SplitHandle>
    </Splitter>
    <PropPage>
      <PageTitle><Label $size={8.4}>Appearance</Label></PageTitle>
      <Groups>
        <GroupStack>
          <Group $h={60}>
            <Label $size={8.8} $weight={700}>Bar</Label>
            <GroupRows>
              <Field $lw={122} $gap={8}><FieldLabel>Foreground color:</FieldLabel><Select w={83} text="0, 121, 206" swatch="#0a80c9" /></Field>
              <Field $lw={122} $gap={8}><FieldLabel>Color gradient:</FieldLabel><Select w={202} text="Entire bar" size={7.1} track={-0.1} /></Field>
            </GroupRows>
          </Group>
          <Group $h={44}>
            <Label $size={8.8} $weight={700}>Text</Label>
            <GroupRows>
              <Field $lw={122} $gap={8}><FieldLabel>Color:</FieldLabel><Select w={83} text="49, 52, 74" swatch="#31344a" /></Field>
            </GroupRows>
          </Group>
        </GroupStack>
        <GroupStack>
          <Group $h={60}>
            <Label $size={8.5} $weight={700}>Background</Label>
            <GroupRows>
              <Field $lw={115}><FieldLabel>Color:</FieldLabel><Select w={83} text="247, 243, 247" swatch="#f7f3f7" /></Field>
              <Field $lw={115}><FieldLabel>Fill pattern:</FieldLabel><Select w={210} text="Solid" swatch="#000" size={7.1} /></Field>
            </GroupRows>
          </Group>
          <Group $h={60}>
            <Label $size={8.5} $weight={700}>Limits</Label>
            <GroupRows>
              <Field $lw={118} $gap={8}><FieldLabel>Lines:</FieldLabel><Checkbox /></Field>
              <Field $lw={118} $gap={8}><FieldLabel>Marks:</FieldLabel><Checkbox /></Field>
            </GroupRows>
          </Group>
        </GroupStack>
      </Groups>
    </PropPage>
  </PropBody>
);

const crumbs = [['MyFirstTrainingPrograme', -0.08], ['HMI_1 [KTP900 Basic PN]', 0.2], ['Screens', 0], ['Root screen', 0.05]];

const Editor = () => (
  <Column $w={854} $edge={2}>
    <PanelHead $active>
      {crumbs.map(([c, track], i) => (
        <React.Fragment key={c}>
          {i > 0 && <Icon name="right" size={6} />}
          <Crumb $track={track}>{c}</Crumb>
        </React.Fragment>
      ))}
      <Spacer />
      <Icon name="minimize" size={8} />
      <Icon name="restore" size={8} />
      <Icon name="maximize" size={8} />
      <Icon name="close" size={8} />
    </PanelHead>
    <Band $h={18} />
    <FormatToolbar />
    <ScreenCanvas />
    <ZoomBar>
      <Select w={103} text="100%" size={7.3} track={-0.2} />
      <Slot $w={12} />
      <svg width="46" height="11">
        <path d="M0 5.500h45" stroke="#77787c" />
        <path d="M0 10h45" stroke="#333" strokeWidth="2" strokeDasharray="1 2" />
        <path d="M13 2h5v4l-2.500 3L13 6z" fill="#d2d2d5" stroke="#8a8a8e" />
      </svg>
      <Slot $w={20}><Slot $w={8} /><Icon name="fit" size={9} /></Slot>
    </ZoomBar>
    <InspectorHead>
      <Label $size={8.9} $weight={600}>Bar_1 [Bar]</Label>
      <HeadIcons />
      <InspectorTab $w={75} $active><Icon name="magnify" size={10} /><Label $size={8.6} $weight={600}>Properties</Label></InspectorTab>
      <InspectorTab $w={51}><Icon name="infoLink" size={10} /><Label $size={8.8} $weight={600}>Info</Label><Slot $w={3} /><Icon name="info" size={10} /></InspectorTab>
      <InspectorTab $w={81}><Icon name="diag" size={10} /><Label $size={8.8} $weight={600}>Diagnostics</Label></InspectorTab>
      <Slot $w={49}>
        <HeadIcons><Icon name="restore" size={8} /><Icon name="strip" size={8} /><Icon name="downTri" size={8} /></HeadIcons>
      </Slot>
    </InspectorHead>
    <PropTabs>
      <PropTab $w={66} $active><Label $size={8.5} $weight={700} $track={-0.12}>Properties</Label></PropTab>
      <PropTab $w={73}><Label $size={8.8} $weight={600}>Animations</Label></PropTab>
      <PropTab $w={51}><Label $size={8.8} $weight={600}>Events</Label></PropTab>
      <PropTab $w={46} $last><Label $size={8.8} $weight={600}>Texts</Label></PropTab>
    </PropTabs>
    <Properties />
  </Column>
);

const Picture = ({ scroll }) => (
  <svg width="20" height="18">
    <rect x=".5" y=".5" width="18" height="16" fill="#f4f7ff" stroke="#9ba7cf" />
    <circle cx="5" cy="5" r="2.200" fill="#efb750" />
    <path d="M2 14.500l4-6 3 4 3-5 4.500 7z" fill="#2a4596" />
    {scroll && <path d="M14.500 0h4.500v17h-4.500z M16 4l1-2 1 2zM16 13l1 2 1-2z" fill="#c2c2c7" stroke="#5a5a60" strokeWidth=".6" />}
  </svg>
);

const Toolbox = () => (
  <Column $w={183}>
    <PanelHead>
      <Label $size={9.2} $weight={600}>Toolbox</Label>
      <Spacer />
      <Icon name="restore" size={8} />
      <Icon name="pane" size={8} />
      <Icon name="right" size={8} />
    </PanelHead>
    <Band $h={18} $bg="linear-gradient(#f4f4f5, #d9d9db)"><Slot $w={3} /><Slot $w={60} $start><Label $size={8.9} $weight={600}>Options</Label></Slot></Band>
    <ToolRow $h={19} $pad={3}>
      <Slot $w={14}><Icon name="arrow" size={10} /></Slot>
      <Slot $w={17}><Icon name="stamp" size={11} /></Slot>
      <Slot $w={15}><Icon name="tool" size={11} /></Slot>
      <Slot $w={17}><Icon name="grid" size={11} /></Slot>
      <Slot $w={2} />
      <Select w={79} text="Dark default value" size={7.1} track={-0.08} />
      <Slot $w={17} />
      <Slot $w={18}><Icon name="rect" size={11} /></Slot>
    </ToolRow>
    <SectionHead $top $h={15}>
      <SectionToggle><Icon name="chevronDown" size={8} /></SectionToggle>
      <Label $size={8.9} $weight={600}>Basic objects</Label>
    </SectionHead>
    <ToolboxBody $h={442} $top={2} $left={-1}>
      <svg width="16" height="17"><path d="M1 15L15 1" stroke="#7177cb" strokeWidth="1.200" /></svg>
      <svg width="19" height="12"><ellipse cx="9.500" cy="6" rx="9" ry="5.200" fill="#7f93fb" stroke="#6570c8" /></svg>
      <svg width="20" height="20"><circle cx="10" cy="10" r="9.200" fill="#7b8efb" stroke="#5d67bd" /></svg>
      <svg width="20" height="16"><rect x=".5" y=".5" width="18" height="14" fill="#7b8efb" stroke="#98a2e6" /></svg>
      <Label $size={18} $color="#15183c">A</Label>
      <Picture />
    </ToolboxBody>
    <SectionHead $top $h={16}>
      <SectionToggle><Icon name="chevronDown" size={8} /></SectionToggle>
      <Label $size={8.9} $weight={600}>Elements</Label>
    </SectionHead>
    <ToolboxBody $h={67} $top={1}>
      <svg width="20" height="12"><rect x=".5" y=".5" width="18" height="10" fill="#c7c7c9" stroke="#4f4f53" /><text x="9.500" y="9" textAnchor="middle" fontSize="8.500" fontWeight="700" fontFamily="Liberation Sans" textLength="16">0.12</text></svg>
      <svg width="20" height="12"><rect width="19" height="11" fill="#dededf" /><path d="M0 10.500h18.500V0" fill="none" stroke="#333" strokeWidth="1.500" /></svg>
      <svg width="20" height="12"><rect x=".5" y=".5" width="18" height="10" fill="#dfe4f7" stroke="#a9a9b6" /><text x="2" y="8.500" fontSize="8" fontWeight="700" fontFamily="Liberation Sans" fill="#15183c">10</text><path d="M12 1h6v9h-6z" fill="#c5c5c9" /><path d="M13 4h4l-2 3z" /></svg>
      <Picture scroll />
      <svg width="20" height="19"><rect x="7" y="5.500" width="11" height="12" fill="#edf1ff" stroke="#35479d" /><path d="M7 6.500h11" stroke="#35479d" strokeWidth="2" /><text x="12.500" y="16" textAnchor="middle" fontSize="9" fontWeight="700" fontFamily="Noto Sans" fill="#202b70">5</text><circle cx="5" cy="5" r="4.200" fill="#f5f7ff" stroke="#8591c5" /><path d="M5 2v3.500h2.500" fill="none" stroke="#35479d" /></svg>
      <svg width="20" height="18"><rect x="2" width="8.500" height="12" fill="#4b60e0" /><rect x="2" y="11" width="8.500" height="6.500" fill="#2d8d50" /><path d="M12 1h4M12 5h4M12 9h4M12 13h4M12 17h4" stroke="#66666a" /></svg>
      <svg width="20" height="18"><rect x=".5" y=".5" width="18" height="16" fill="#c3c4c7" stroke="#7e7e83" /><path d="M3.500 8h12v6h-12z" fill="#eee" stroke="#66666a" /><path d="M4 8.500h5v5H4z" fill="#7b8efb" /><text x="3" y="6.500" fontSize="6" fontWeight="700" fontFamily="Liberation Sans">0</text><text x="13" y="6.500" fontSize="6" fontWeight="700" fontFamily="Liberation Sans">1</text></svg>
    </ToolboxBody>
    {[['Controls', 16], ['Graphics', 15]].map(([name, h]) => (
      <SectionHead key={name} $top $h={h}>
        <SectionToggle><Icon name="chevronRight" size={8} /></SectionToggle>
        <Label $size={8.9} $weight={600}>{name}</Label>
      </SectionHead>
    ))}
  </Column>
);

const Taskline = () => (
  <Taskbar>
    <Slot $w={32}><svg width="12" height="12"><path d="M0 1.500l5-.7v4.700H0zM6 .7L12 0v5.500H6zM0 6.500h5v4.700l-5-.7zM6 6.500h6V12l-6-.8z" fill="#fff" /></svg></Slot>
    <TaskSearch>
      <svg width="12" height="13"><circle cx="7.500" cy="4.500" r="3.800" fill="none" stroke="#333" /><path d="M5 7.500L1 12" stroke="#333" /></svg>
      <Label $size={10} $track={-0.33}>Type here to search</Label>
    </TaskSearch>
    <TaskApp $w={31}><svg width="12" height="13"><path d="M1 0v3h7V0M1 13v-3h7v3M1 4.500h7v4H1zM11 0v13" fill="none" stroke="#ddd" /><path d="M10 4h2v3h-2z" fill="#fff" /></svg></TaskApp>
    <TaskApp $w={36}>
      <svg width="17" height="17" viewBox="0 0 17 17"><circle cx="8.500" cy="8.500" r="8" fill="#1783d0" /><path d="M1 7c1-8 14-9 15.500 1 .3 4-5 4.500-6 2.500 1.500-3-1-5-4-5-3 0-5 1-5.500 1.500z" fill="#4fd1a4" /><path d="M7 8c-2 4 2 8 7 6-5 5-12 1-11-4 1-3 3-3 4-2z" fill="#0d5aa5" /></svg>
    </TaskApp>
    <TaskApp $w={30}>
      <svg width="16" height="13"><path d="M0 1h6l1.500 2H15v10H0z" fill="#f8cf58" /><path d="M3 13V7h9v6h-2v-3H5v3z" fill="#398bd5" /></svg>
    </TaskApp>
    <TaskApp $w={34}>
      <svg width="16" height="17"><path d="M0 4h16v12H0z" fill="#f5f5f5" /><path d="M5 4V1h6v3" fill="none" stroke="#f5f5f5" /><path d="M4 6h3.500v3.500H4z" fill="#e5532f" /><path d="M8.500 6H12v3.500H8.500z" fill="#7eb834" /><path d="M4 10.500h3.500V14H4z" fill="#2c9ed8" /><path d="M8.500 10.500H12V14H8.500z" fill="#f0b62a" /></svg>
    </TaskApp>
    <TaskApp $w={32}><svg width="16" height="15"><path d="M0 4l8-4 8 4v10H0z" fill="#f4f4f4" /><path d="M1 5h14l-7 5z" fill="#1e2a2a" /></svg></TaskApp>
    <TaskApp $w={31.5} $active $open><AppWord>TIA</AppWord><AppWord $color="#aab2ea">V14</AppWord></TaskApp>
    <Slot $w={3.5} />
    <TaskApp $w={27} $open><AppWord>PLC</AppWord><AppWord $color="#aab2ea">SIM</AppWord></TaskApp>
    <Spacer />
    <Slot $w={22}><svg width="16" height="13"><path d="M.5 .5h12v12H.5zM13 3h2.500v9.500H12M3 6.500h3v3H3zM8 6.500h3M8 9.500h3M3 3.500h8" fill="none" stroke="#ddd" /></svg></Slot>
    <Slot $w={64} $start><Label $size={9.1}>5°C  Zonnig</Label></Slot>
    <Slot $w={16}><svg width="9" height="6"><path d="M.5 5l4-4 4 4" fill="none" stroke="#eee" /></svg></Slot>
    <Slot $w={16}><svg width="10" height="12"><path d="M1 3h6v6H1zM7 5l2-1v4l-2-1M2 1h4M2 11h4" fill="none" stroke="#ddd" /></svg></Slot>
    <Slot $w={16}><svg width="13" height="13"><circle cx="6" cy="6" r="5" fill="none" stroke="#ddd" /><path d="M1 6h10M6 1v10M3 2c-1 3-1 5 0 8M9 2c1 3 1 5 0 8" fill="none" stroke="#ddd" strokeWidth=".7" /><circle cx="10" cy="10" r="2.300" fill="#1e2a2a" stroke="#ddd" /></svg></Slot>
    <Slot $w={16}><svg width="12" height="11"><path d="M1 4h2l3-3v9L3 7H1zM7.500 4v3M9 2.500c1 2 1 4 0 6M10.500 1c1.500 3 1.500 6 0 9" fill="none" stroke="#ddd" strokeWidth=".9" /></svg></Slot>
    <Slot $w={19}><Label $size={8.5} $track={-0.3}>ENG</Label></Slot>
    <Clock><Label $size={8} $track={-0.3}>12:52</Label><Label $size={8} $track={-0.25}>25/01/2026</Label></Clock>
    <Slot $w={21}>
      <svg width="20" height="18"><path d="M1 1h12v9H6l-3 3v-3H1z" fill="#f4f4f4" /><path d="M3 4h8M3 7h8" stroke="#1e2a2a" /><circle cx="12" cy="11.500" r="5" fill="#384343" stroke="#a2a9a9" /><text x="12" y="14.500" textAnchor="middle" fontSize="8" fill="#fff" fontFamily="Noto Sans">5</text></svg>
    </Slot>
    <Slot $w={10} />
  </Taskbar>
);

const App = () => (
  <ThemeProvider theme={theme}>
    <GlobalStyle />
    <Window>
      <TopSliver />
      <TitleBar>
        <svg width="11" height="12"><text x="0" y="5.500" fontSize="5.500" fontWeight="700" fontFamily="Liberation Sans" fill="#c7cbe8" textLength="9">TIA</text><text x="0" y="11" fontSize="5.500" fontWeight="700" fontFamily="Liberation Sans" fill="#a9b0e0" textLength="10">V14</text></svg>
        <Slot $w={4} />
        <Label $size={8.6} $track={-0.18} $weight={600}>{'Siemens  -  C:\\Users\\Jafar\\Desktop\\Tia portal projects\\MyFirstTrainingPrograme\\MyFirstTrainingPrograme'}</Label>
        <Spacer />
        <Slot $w={10}><Icon name="minimize" size={7} /></Slot>
        <Slot $w={10}><Icon name="restore" size={7} /></Slot>
        <Slot $w={10}><Icon name="close" size={7} /></Slot>
      </TitleBar>
      <TopArea>
        <div>
          <MenuBar>{menu.map(([text, w]) => <MenuItem key={text} $w={w}>{text}</MenuItem>)}</MenuBar>
          <MainToolbar />
        </div>
        <Brand>
          <Label $size={8.95} $weight={600} $color="#2c2c30">Totally Integrated Automation</Label>
          <Label $size={10.8} $weight={700} $color="#77787c">PORTAL</Label>
        </Brand>
      </TopArea>
      <Work>
        <Rail>
          <RailTop />
          <RailTab><RailText>Visualization</RailText></RailTab>
        </Rail>
        <ProjectTree />
        <Editor />
        <Toolbox />
        <SideTabs>
          {sideTabs.map(([name, icon, h], i) => (
            <SideTab key={name} $h={h} $active={i === 0}>
              <Icon name={icon} size={11} />
              <span>{name}</span>
            </SideTab>
          ))}
        </SideTabs>
      </Work>
      <StatusBar>
        <Slot $w={35}><Slot $w={16} /><Icon name="left" size={8} /></Slot>
        <Slot $w={85.5} $start><Label $size={9} $weight={600}>Portal view</Label></Slot>
        {editorTabs.map(([text, icon, color]) => (
          <EditorTab key={text} $active={text === 'Root screen'}>
            <Icon name={icon} size={10} color={color} />
            <Label $size={8} $track={-0.1}>{text}</Label>
          </EditorTab>
        ))}
        <Spacer />
        <Slot $w={17}><Icon name="portalPage" size={11} /></Slot>
        <Slot $w={17} $sep><Icon name="check" size={9} /></Slot>
        <Slot $w={180} $start><Label $size={7.9} $track={-0.2}>The project MyFirstTrainingPrograme w...</Label></Slot>
        <Icon name="pc" size={11} w={9} />
      </StatusBar>
      <Taskline />
    </Window>
    <Pointer>
      <svg width="16" height="20">
        <circle cx="7" cy="9" r="6" fill="#e6e62c" opacity=".75" />
        <path d="M7.500 8v10l2.500-2 1.500 3 1.500-.8-1.500-3h3z" fill="#fff" stroke="#444" strokeWidth=".8" />
      </svg>
    </Pointer>
  </ThemeProvider>
);

export default App;
